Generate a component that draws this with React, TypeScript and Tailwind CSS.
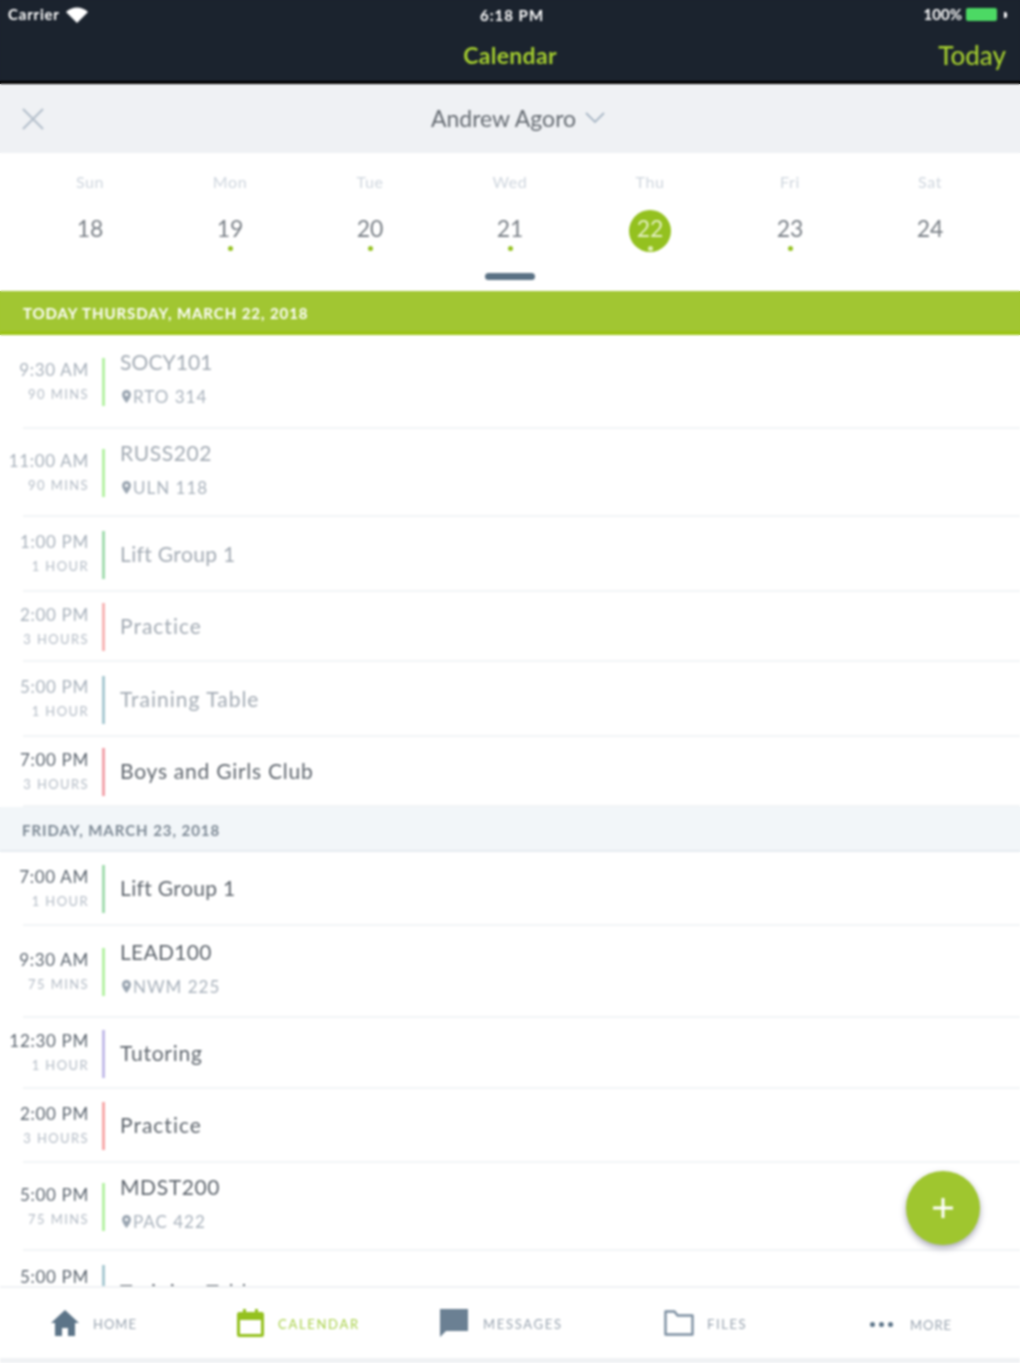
import React from "react";

type Row = { h: string; time: string; dur: string; title: string; tr: string; loc?: string; bar: string; past: boolean };

const today: Row[] = [
  { h: "h-[94px]", time: "9:30 AM", dur: "90 MINS", title: "SOCY101", tr: "tracking-[0.1px]", loc: "RTO 314", bar: "bg-[#b5f2a4]", past: true },
  { h: "h-[88px]", time: "11:00 AM", dur: "90 MINS", title: "RUSS202", tr: "tracking-[0.6px]", loc: "ULN 118", bar: "bg-[#b5f2a4]", past: true },
  { h: "h-[75px]", time: "1:00 PM", dur: "1 HOUR", title: "Lift Group 1", tr: "tracking-[0.35px]", bar: "bg-[#a3dcb0]", past: true },
  { h: "h-[70px]", time: "2:00 PM", dur: "3 HOURS", title: "Practice", tr: "tracking-[1px]", bar: "bg-[#f7b5b5]", past: true },
  { h: "h-[75px]", time: "5:00 PM", dur: "1 HOUR", title: "Training Table", tr: "tracking-[1px]", bar: "bg-[#a9c9d2]", past: true },
  { h: "h-[70px]", time: "7:00 PM", dur: "3 HOURS", title: "Boys and Girls Club", tr: "tracking-[0.75px]", bar: "bg-[#f2a3ab]", past: false },
];

const friday: Row[] = [
  { h: "h-[74px]", time: "7:00 AM", dur: "1 HOUR", title: "Lift Group 1", tr: "tracking-[0.35px]", bar: "bg-[#a3dcb0]", past: false },
  { h: "h-[92px]", time: "9:30 AM", dur: "75 MINS", title: "LEAD100", tr: "tracking-[0.3px]", loc: "NWM 225", bar: "bg-[#b5f2a4]", past: false },
  { h: "h-[71px]", time: "12:30 PM", dur: "1 HOUR", title: "Tutoring", tr: "tracking-[0.75px]", bar: "bg-[#c3bce8]", past: false },
  { h: "h-[74px]", time: "2:00 PM", dur: "3 HOURS", title: "Practice", tr: "tracking-[1px]", bar: "bg-[#f7a9a9]", past: false },
  { h: "h-[88px]", time: "5:00 PM", dur: "75 MINS", title: "MDST200", tr: "tracking-[0.6px]", loc: "PAC 422", bar: "bg-[#b5f2a4]", past: false },
];

const days = [
  { d: "Sun", n: "18", dot: false },
  { d: "Mon", n: "19", dot: true },
  { d: "Tue", n: "20", dot: true },
  { d: "Wed", n: "21", dot: true },
  { d: "Thu", n: "22", dot: true, sel: true },
  { d: "Fri", n: "23", dot: true },
  { d: "Sat", n: "24", dot: false },
];

function Pin() {
  return (
    <svg width="9" height="13" viewBox="0 0 9 13" className="shrink-0 ml-[2px]">
      <path d="M4.5 0C2 0 0 2 0 4.5 0 8 4.5 13 4.5 13S9 8 9 4.5C9 2 7 0 4.5 0z" fill="#9aa5b1" />
      <circle cx="4.5" cy="4.5" r="1.6" fill="#fff" />
    </svg>
  );
}

function EventRow({ r }: { r: Row }) {
  return (
    <div className={`${r.h} shrink-0 relative flex items-center`}>
      <div className="w-[89px] shrink-0 flex flex-col items-end">
        <span className={`text-[17px] leading-[24px] tracking-[0.7px] -mt-[1px] whitespace-nowrap ${r.past ? "text-[#a9b2bc]" : "text-[#5d6670]"}`}>{r.time}</span>
        <span className="text-[13px] leading-[24px] tracking-[1.4px] whitespace-nowrap text-[#b4bcc6]">{r.dur}</span>
      </div>
      <div className={`ml-[13px] w-[3px] h-[48px] shrink-0 ${r.bar}`} />
      <div className={`ml-[15px] flex flex-col justify-center min-w-0 ${r.loc ? "-mt-[8px]" : "-mt-[2px]"}`}>
        <span className={`text-[21px] leading-[30px] whitespace-nowrap ${r.tr} ${r.past ? "text-[#a3abb4]" : "text-[#5f666e]"}`}>{r.title}</span>
        {r.loc && (
          <span className="mt-[7px] flex items-center gap-[2px] text-[17px] leading-[26px] tracking-[1px] whitespace-nowrap text-[#a9b2bc]">
            <Pin />
            {r.loc}
          </span>
        )}
      </div>
      <div className="absolute left-[23px] right-0 bottom-0 h-[2px] bg-[#f2f4f6]" />
    </div>
  );
}

export default function App() {
  return (
    <div className="w-[1020px] h-[1363px] overflow-hidden bg-[linear-gradient(#1b232e_0_81px,#000_81px_84px,#eff1f4_84px_153px,#fff_153px_291px,#a1c632_291px_335px,#fff_335px_807px,#f2f6f9_807px_852px,#fff_852px)]">
      <div className="relative w-[1020px] h-[1363px] overflow-hidden bg-white flex flex-col blur-[1px] font-['Lato','Open_Sans',sans-serif]">
        <div className="h-[81px] shrink-0 bg-[#1b232e] flex flex-col">
          <div className="h-[29px] px-[8px] flex items-center justify-between text-white text-[15px] font-bold relative">
            <div className="flex items-center gap-[6px]">
              <span className="tracking-[0.8px]">Carrier</span>
              <svg width="22" height="16" viewBox="0 0 22 16">
                <path d="M11 16L0 5C6 -1 16 -1 22 5z" fill="#fff" />
              </svg>
            </div>
            <span className="absolute left-[480px] top-[4px] tracking-[1px]">6:18 PM</span>
            <div className="flex items-center gap-[4px]">
              <span>100%</span>
              <div className="w-[31px] h-[13px] bg-[#4cd964] rounded-[2px]" />
              <div className="w-[3px] h-[6px] ml-[3px] mr-[5px] bg-white rounded-r-[2px]" />
            </div>
          </div>
          <div className="h-[52px] relative flex items-center justify-center">
            <span className="text-[#a4cd2f] text-[23px] font-bold tracking-[0.3px]">Calendar</span>
            <span className="absolute right-[14px] top-[10px] text-[#a4cd2f] text-[26px] leading-[32px] font-medium">Today</span>
          </div>
        </div>
        <div className="h-[3px] shrink-0 bg-black" />
        <div className="h-[69px] shrink-0 bg-[#eff1f4] relative flex items-center justify-center">
          <svg width="24" height="24" viewBox="0 0 24 24" className="absolute left-[21px] top-[23px]">
            <path d="M2 2L22 22M22 2L2 22" stroke="#b5c0cc" strokeWidth="2.2" fill="none" />
          </svg>
          <span className="text-[23px] text-[#666c73] ml-[16px]">Andrew Agoro</span>
          <svg width="20" height="12" viewBox="0 0 20 12" className="ml-[9px] -mt-[1px]">
            <path d="M1 1L10 10L19 1" stroke="#a9b7c6" strokeWidth="1.8" fill="none" />
          </svg>
        </div>
        <div className="h-[138px] shrink-0 bg-white relative">
          <div className="grid grid-cols-7 w-[980px] ml-[20px] pt-[17px]">
            {days.map((x) => (
              <div key={x.d} className="flex flex-col items-center">
                <span className="text-[16px] leading-[24px] tracking-[0.6px] text-[#cfd6de]">{x.d}</span>
                <div className="mt-[14px] relative w-[42px] h-[42px] flex items-center justify-center">
                  {x.sel && <div className="absolute left-0 top-[2px] w-[42px] h-[42px] rounded-full bg-[#94c11f]" />}
                  <span className={`relative text-[23px] -mt-[2px] ${x.sel ? "text-[#e4f0c2]" : "text-[#7a8087]"}`}>{x.n}</span>
                  {x.dot && <div className={`absolute left-[19px] bottom-[-1px] w-[5px] h-[5px] rounded-full ${x.sel ? "bg-[#dfeeb5]" : "bg-[#94c11f]"}`} />}
                </div>
              </div>
            ))}
          </div>
          <div className="absolute left-[485px] top-[120px] w-[50px] h-[7px] rounded-full bg-[#5a7184]" />
        </div>
        <div className="h-[44px] shrink-0 bg-[#a1c632] border-b-[4px] border-[#9cc417] flex items-center pl-[23px] pt-[4px]">
          <span className="text-white text-[15px] font-bold tracking-[0.93px]">TODAY THURSDAY, MARCH 22, 2018</span>
        </div>
        <div className="flex-1 min-h-0 overflow-hidden flex flex-col">
          {today.map((r, i) => (
            <EventRow key={i} r={r} />
          ))}
          <div className="h-[45px] shrink-0 bg-[#f2f6f9] border-b-[2px] border-[#e6ebf0] flex items-center pl-[22px] pt-[4px]">
            <span className="text-[#7c8894] text-[15px] font-bold tracking-[0.95px]">FRIDAY, MARCH 23, 2018</span>
          </div>
          {friday.map((r, i) => (
            <EventRow key={i} r={r} />
          ))}
          <div className="h-[36px] shrink-0 relative flex items-start overflow-hidden">
            <div className="w-[89px] shrink-0 flex justify-end pt-[14px]">
              <span className="text-[17px] leading-[24px] tracking-[0.7px] whitespace-nowrap text-[#5d6670]">5:00 PM</span>
            </div>
            <div className="ml-[13px] mt-[14px] w-[3px] h-[48px] shrink-0 bg-[#a9c9d2]" />
            <span className="ml-[15px] mt-[26px] text-[21px] leading-[30px] tracking-[1px] whitespace-nowrap text-[#5f666e]">Training Table</span>
          </div>
        </div>
        <div className="h-[72px] shrink-0 bg-white border-t-[2px] border-[#f0f2f4] relative flex items-center">
          <div className="absolute left-[51px] top-[22px] flex items-center gap-[14px]">
            <svg width="28" height="26" viewBox="0 0 28 26">
              <path d="M14 0L0 13h4v13h7v-8h6v8h7V13h4z" fill="#5c7488" />
            </svg>
            <span className="text-[13px] tracking-[1px] mt-[3px] text-[#9aa5b1]">HOME</span>
          </div>
          <div className="absolute left-[237px] top-[21px] flex items-center gap-[14px]">
            <svg width="27" height="28" viewBox="0 0 27 28">
              <rect x="1.5" y="4.5" width="24" height="22" rx="1" fill="none" stroke="#94c11f" strokeWidth="3" />
              <rect x="1" y="4" width="25" height="7" fill="#94c11f" />
              <rect x="6" y="0" width="3" height="6" fill="#94c11f" />
              <rect x="18" y="0" width="3" height="6" fill="#94c11f" />
            </svg>
            <span className="text-[13px] tracking-[1.7px] mt-[3px] text-[#a9d14a]">CALENDAR</span>
          </div>
          <div className="absolute left-[439px] top-[21px] flex items-center gap-[14px]">
            <svg width="30" height="28" viewBox="0 0 30 28">
              <path d="M1 0h28v22H7l-6 6z" fill="#6b8093" />
            </svg>
            <span className="text-[13px] tracking-[1.7px] mt-[3px] text-[#9aa5b1]">MESSAGES</span>
          </div>
          <div className="absolute left-[664px] top-[22px] flex items-center gap-[13px]">
            <svg width="30" height="26" viewBox="0 0 30 26">
              <path d="M1.5 24.5V1.5h9l3 4h15v19z" fill="none" stroke="#7c8fa1" strokeWidth="2.4" strokeLinejoin="round" />
            </svg>
            <span className="text-[13px] tracking-[1.6px] mt-[3px] text-[#9aa5b1]">FILES</span>
          </div>
          <div className="absolute left-[870px] top-[26px] flex items-center gap-[17px]">
            <div className="flex gap-[4px]">
              <div className="w-[5px] h-[5px] rounded-full bg-[#5c7488]" />
              <div className="w-[5px] h-[5px] rounded-full bg-[#5c7488]" />
              <div className="w-[5px] h-[5px] rounded-full bg-[#5c7488]" />
            </div>
            <span className="text-[13px] tracking-[1px] mt-[2px] text-[#9aa5b1]">MORE</span>
          </div>
        </div>
        <div className="h-[5px] shrink-0 bg-[#f0f2f4]" />
        <div className="absolute left-[906px] top-[1171px] w-[74px] h-[74px] rounded-full bg-[#9fc62f] shadow-[0_3px_6px_rgba(60,60,90,0.45)] flex items-center justify-center">
          <svg width="22" height="22" viewBox="0 0 22 22">
            <path d="M11 1V21M1 11H21" stroke="#fff" strokeWidth="3" />
          </svg>
        </div>
      </div>
    </div>
  );
}
